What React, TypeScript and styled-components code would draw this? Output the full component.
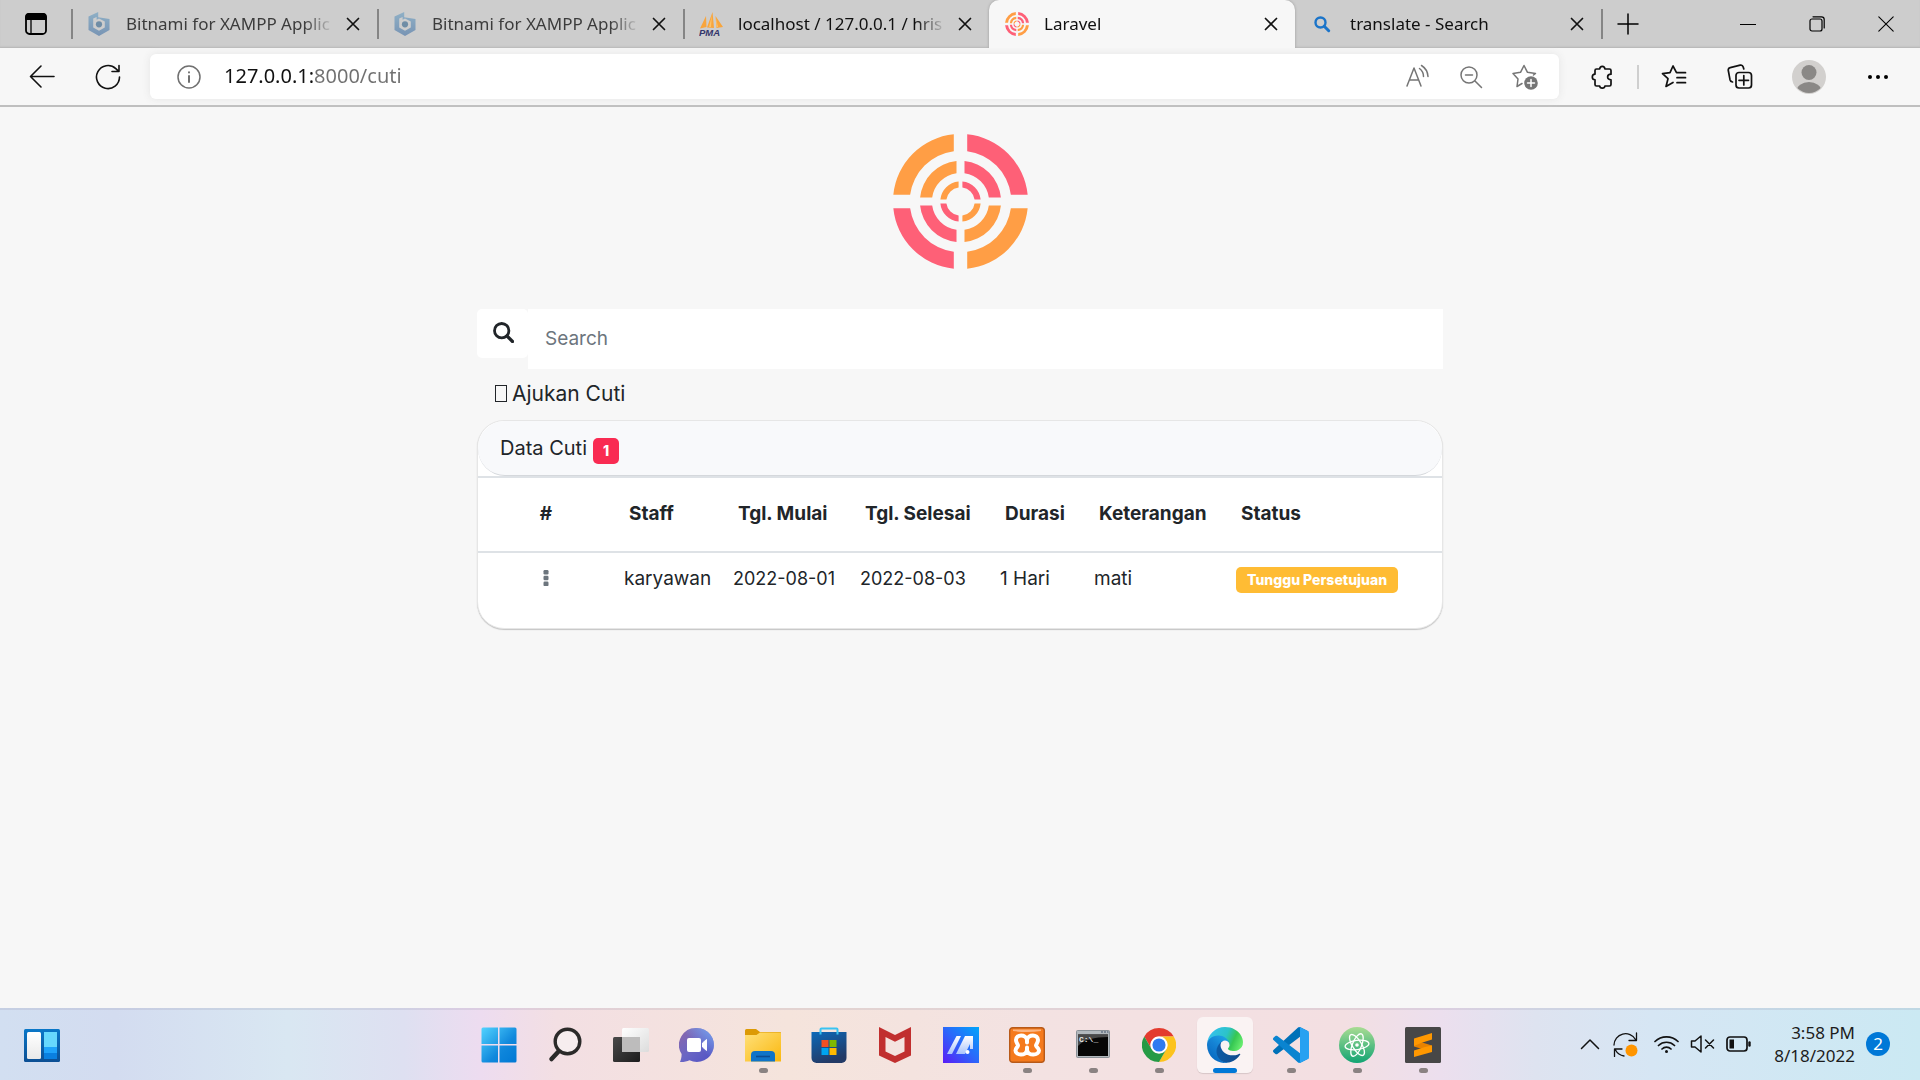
import React from "react";
import styled, { createGlobalStyle, css } from "styled-components";

const uiFont = '"Noto Sans", "Open Sans", sans-serif';
const pageFont = 'Inter, "Liberation Sans", sans-serif';

const GlobalStyle = createGlobalStyle`
  *, *::before, *::after { box-sizing: border-box; }
  body { margin: 0; background: #f7f7f7; font-family: ${uiFont}; }
  button, input { font: inherit; }
  svg { display: block; flex: none; }
`;

const Screen = styled.div`
  min-height: 100vh;
  display: flex;
  flex-direction: column;
`;

const buttonReset = css`
  border: 0;
  padding: 0;
  background: none;
  color: inherit;
  display: flex;
  align-items: center;
  justify-content: center;
  cursor: pointer;
`;

/* ---------- Browser chrome ---------- */

const TabStrip = styled.div`
  display: flex;
  height: 48px;
  background: #cdcdcd;
  box-shadow: inset 0 -2px 2px -1px #b4b4b4;
`;

const StripButton = styled.button<{ $width: number }>`
  ${buttonReset}
  width: ${(p) => p.$width}px;
  flex: none;
  color: #000;
`;

const Tab = styled.div<{ $active?: boolean; $divider?: boolean }>`
  display: flex;
  align-items: center;
  flex: 0 1 306px;
  min-width: 0;
  padding-right: 14px;
  border-radius: 10px 10px 0 0;
  ${(p) => p.$active && "background: #f7f7f7; box-shadow: 0 0 3px #9a9a9a; clip-path: inset(0 -4px 0 -4px);"}
  &::before {
    content: "";
    width: 2px;
    height: 30px;
    margin-right: 14px;
    background: ${(p) => (p.$divider ? "#858585" : "transparent")};
  }
`;

const TabLink = styled.a<{ $dim?: boolean }>`
  display: flex;
  align-items: center;
  gap: 15px;
  flex: 1;
  min-width: 0;
  color: ${(p) => (p.$dim ? "#3c3c3c" : "#101010")};
  text-decoration: none;
  font-size: 17px;
  line-height: 24px;
`;

const TabTitle = styled.span`
  flex: 1;
  overflow: hidden;
  white-space: nowrap;
  mask-image: linear-gradient(90deg, #000 calc(100% - 30px), transparent);
`;

const CloseButton = styled.button`
  ${buttonReset}
  width: 20px;
  height: 24px;
  margin-left: 9px;
  color: #111;
`;

const NewTabDivider = styled.span`
  width: 2px;
  height: 30px;
  align-self: center;
  background: #858585;
`;

const WindowControls = styled.div`
  display: flex;
  margin-left: auto;
`;

const Toolbar = styled.div`
  display: flex;
  align-items: center;
  height: 59px;
  padding: 0 9px;
  background: #f7f7f7;
  border-bottom: 2px solid #bfbfbf;
`;

const ToolButton = styled.button<{ $width?: number }>`
  ${buttonReset}
  width: ${(p) => p.$width ?? 66}px;
  height: 45px;
  flex: none;
  color: #111;
`;

const ToolDivider = styled.span`
  width: 2px;
  height: 24px;
  margin: 0 2px;
  background: #cfcfcf;
`;

const AddressBar = styled.div`
  display: flex;
  align-items: center;
  flex: 1;
  min-width: 0;
  height: 45px;
  margin: 0 10px 0 9px;
  padding: 0 21px 0 27px;
  gap: 27px;
  background: #fff;
  border-radius: 6px;
  box-shadow: 0 0 8px #e4e4e4;
  color: #707070;
`;

const AddressInput = styled.input`
  flex: 1;
  min-width: 0;
  border: 0;
  padding: 0 0 2px;
  margin-left: -4px;
  outline: none;
  font-size: 20px;
  line-height: 30px;
  color: #707070;
  background: linear-gradient(90deg, #111 89px, #707070 89px);
  background-clip: text;
  -webkit-text-fill-color: transparent;
`;

const AddressButton = styled.button`
  ${buttonReset}
  width: 27px;
  height: 30px;
  color: #757575;
`;

/* ---------- Page ---------- */

const Page = styled.main`
  flex: 1;
  width: 100%;
  max-width: 966px;
  margin: 0 auto;
  padding-top: 27px;
  font-family: ${pageFont};
  color: #212529;
`;

const LogoWrap = styled.div`
  display: flex;
  justify-content: center;
  margin-bottom: 40px;
`;

const SearchForm = styled.form`
  display: flex;
  align-items: flex-start;
`;

const SearchButton = styled.button`
  ${buttonReset}
  width: 51px;
  height: 49px;
  padding: 0 0 2px 2px;
  background: #fff;
  border-radius: 5px;
`;

const SearchInput = styled.input`
  flex: 1;
  min-width: 0;
  height: 60px;
  padding: 0 17px 2px;
  border: 0;
  outline: none;
  background: #fff;
  font-size: 19px;
  color: #495057;
  &::placeholder { color: #6c757d; opacity: 1; }
`;

const SubmitLink = styled.a`
  display: flex;
  align-items: center;
  gap: 5px;
  width: fit-content;
  height: 51px;
  padding: 0 18px 3px;
  color: #212529;
  text-decoration: none;
  font-size: 21px;
`;

const MissingGlyph = styled.span`
  width: 12px;
  height: 17px;
  border: 1px solid #212529;
`;

const Card = styled.section`
  overflow: hidden;
  border: 1px solid #e6e6e6;
  border-radius: 27px;
  background: #fff;
  box-shadow: 0 1px 1px #c4c4c4;
`;

const CardHeader = styled.header`
  display: flex;
  align-items: center;
  gap: 6px;
  height: 55px;
  padding-left: 22px;
  border-bottom: 1px solid #d5d8dc;
  border-radius: 27px;
  background: #f8f9fb;
`;

const CardTitle = styled.h1`
  margin: 0;
  font-size: 20px;
  font-weight: 400;
  line-height: 28px;
`;

const Badge = styled.span<{ $tone: "danger" | "warning" }>`
  display: inline-flex;
  align-items: center;
  justify-content: center;
  height: 26px;
  padding: 0 ${(p) => (p.$tone === "danger" ? 10 : 11)}px;
  border-radius: 5px;
  background: ${(p) => (p.$tone === "danger" ? "#f92b52" : "#ffbc34")};
  color: #fff;
  font-size: 14px;
  font-weight: 800;
  line-height: 20px;
  white-space: nowrap;
`;

const CountBadge = styled(Badge)`
  margin-top: 5px;
`;

const LeaveTable = styled.table`
  width: 100%;
  table-layout: fixed;
  border-collapse: collapse;
  font-size: 19px;
  line-height: 28px;
  text-align: left;
`;

const HeadCell = styled.th<{ $center?: boolean }>`
  height: 75px;
  padding: 0 0 2px ${(p) => (p.$center ? 0 : 15)}px;
  border: solid #dee2e6;
  border-width: 2px 0;
  font-weight: 700;
  text-align: ${(p) => (p.$center ? "center" : "left")};
  white-space: nowrap;
`;

const Cell = styled.td<{ $center?: boolean; $date?: boolean }>`
  height: 76px;
  padding: 12px 0 0 ${(p) => (p.$center ? 0 : 10)}px;
  font-size: ${(p) => (p.$date ? 18 : 19)}px;
  vertical-align: top;
  white-space: nowrap;
`;

const MenuButton = styled.button`
  ${buttonReset}
  width: 30px;
  height: 26px;
  margin: 0 auto;
  color: #6c757d;
`;

/* ---------- Taskbar ---------- */

const Taskbar = styled.footer`
  display: grid;
  grid-template-columns: 1fr auto 1fr;
  align-items: center;
  height: 72px;
  border-top: 2px solid rgba(120, 110, 140, 0.14);
  background: linear-gradient(
    90deg,
    #d2dff1 0%,
    #d3dcf0 6%,
    #d9e7f2 15%,
    #dee0f1 21%,
    #eddcf0 25%,
    #f3dfe3 29%,
    #f5e4dc 41%,
    #f3e2e2 54%,
    #f3dfe2 70%,
    #ecdfee 75%,
    #dee3f0 80%,
    #d6e6f4 86%,
    #cbe9f3 100%
  );
`;

const WidgetButton = styled.button`
  ${buttonReset}
  width: 66px;
  height: 56px;
  margin-left: 9px;
`;

const AppList = styled.nav`
  display: flex;
  padding-left: 2px;
`;

const AppButton = styled.button<{ $active?: boolean }>`
  ${buttonReset}
  flex-direction: column;
  justify-content: flex-end;
  gap: 5px;
  width: 56px;
  height: 56px;
  margin: 0 5px;
  border-radius: 6px;
  ${(p) => p.$active && "background: rgba(255, 255, 255, 0.6); box-shadow: 0 1px 1px rgba(0, 0, 0, 0.12);"}
`;

const Indicator = styled.span<{ $state: "none" | "open" | "active" }>`
  width: ${(p) => (p.$state === "active" ? 24 : 9)}px;
  height: 5px;
  border-radius: 3px;
  background: ${(p) => ({ none: "transparent", open: "#8a8282", active: "#0078d7" })[p.$state]};
`;

const Tray = styled.div`
  display: flex;
  align-items: center;
  justify-content: flex-end;
  gap: 11px;
  padding: 0 30px 2px 0;
  color: #111;
`;

const TrayGroup = styled.div`
  display: flex;
  gap: 11px;
  margin-right: 5px;
`;

const TrayButton = styled.button`
  ${buttonReset}
  width: 25px;
  height: 40px;
`;

const Clock = styled.time`
  margin-left: 12px;
  font-size: 17px;
  line-height: 23px;
  text-align: right;
  color: #1c1c1c;
`;

const Notice = styled.span`
  display: flex;
  align-items: center;
  justify-content: center;
  width: 24px;
  height: 24px;
  border-radius: 50%;
  background: #0078d7;
  color: #fff;
  font-size: 17px;
  line-height: 24px;
`;

/* ---------- Drawings ---------- */

const ORANGE = "#ff9e45";
const PINK = "#fe6077";

const rings = [
  { outer: 67.5, inner: 50.8, half: 6.7 },
  { outer: 40.6, inner: 28.6, half: 4 },
  { outer: 20.2, inner: 14.2, half: 1.9 },
];

function TargetLogo({ size }: { size: number }) {
  return (
    <svg width={size} height={size} viewBox="-67.5 -67.5 135 135" aria-hidden="true">
      {rings.map(({ outer, inner, half }) => {
        const o = Math.sqrt(outer * outer - half * half);
        const i = Math.sqrt(inner * inner - half * half);
        const d = `M${half} ${-o}A${outer} ${outer} 0 0 1 ${o} ${-half}H${i}A${inner} ${inner} 0 0 0 ${half} ${-i}Z`;
        return [0, 90, 180, 270].map((angle, n) => (
          <path key={`${outer}-${angle}`} d={d} fill={n % 2 ? ORANGE : PINK} transform={`rotate(${angle})`} />
        ));
      })}
    </svg>
  );
}

type LineProps = { w?: number; h?: number; box?: string; sw?: number; children: React.ReactNode };
const Line = ({ w = 24, h = w, box, sw = 1.6, children }: LineProps) => (
  <svg
    width={w}
    height={h}
    viewBox={box ?? `0 0 ${w} ${h}`}
    fill="none"
    stroke="currentColor"
    strokeWidth={sw}
    strokeLinecap="round"
    strokeLinejoin="round"
    aria-hidden="true"
  >
    {children}
  </svg>
);

const CloseIcon = () => <Line w={14} sw={1.7}><path d="M1.5 1.5l11 11M12.5 1.5l-11 11" /></Line>;

const Bitnami = () => (
  <svg width="24" height="24" viewBox="0 0 24 24" aria-hidden="true">
    <defs>
      <linearGradient id="bit" x1="0" y1="0" x2="0" y2="1">
        <stop offset="0" stopColor="#8fb0c6" />
        <stop offset="1" stopColor="#7894b4" />
      </linearGradient>
    </defs>
    <path
      fill="url(#bit)"
      fillRule="evenodd"
      d="M1.5 4.5L11.2 0v5.2L22.5 7v11L12 24 1.5 18zM6.2 6.6v8.800l5.800 3.400 5.800-3.400V9.600L12 6.400 9.600 7.800V4.900z"
    />
    <circle cx="12" cy="12.3" r="3.1" fill="#6f8da6" />
  </svg>
);

const PmaIcon = () => (
  <svg width="24" height="24" viewBox="0 0 24 24" aria-hidden="true">
    <path d="M7 4L1 16.500l6.500-1.500zM13.500 0L8 15.500l7 .5zM16.500 4l1 12 6.500-1z" fill="#f8a53c" />
    <path d="M13 3l-3 12h2zM17 6l2 9h-1.500z" fill="#fbc36b" />
    <text x="0" y="23.500" fontSize="9.500" fontWeight="700" fontStyle="italic" fontFamily="Liberation Sans" fill="#34356b">PMA</text>
  </svg>
);

const BingSearch = () => (
  <svg width="24" height="24" viewBox="0 0 24 24" fill="none" stroke="#1b74c9" aria-hidden="true">
    <circle cx="9.500" cy="10.500" r="5" strokeWidth="2.400" />
    <path d="M13.200 14.200l4.500 4.500" strokeWidth="3" strokeLinecap="round" />
  </svg>
);

const StartIcon = () => (
  <svg width="36" height="36" viewBox="0 0 36 36" aria-hidden="true">
    <defs>
      <linearGradient id="win" x1="0" y1="0" x2="1" y2="1">
        <stop offset="0" stopColor="#52d3ff" />
        <stop offset=".6" stopColor="#1088dc" />
        <stop offset="1" stopColor="#0078d4" />
      </linearGradient>
    </defs>
    <path fill="url(#win)" d="M2 .5h15v16.500H.5V2A1.500 1.500 0 0 1 2 .5zM18.500.5h15.500a1.500 1.500 0 0 1 1.500 1.500v15h-17zM.5 18.500H17v17H2A1.500 1.500 0 0 1 .5 34zM18.500 18.500h17V34a1.500 1.500 0 0 1-1.500 1.500H18.500z" />
  </svg>
);

const TaskSearch = () => (
  <svg width="36" height="36" viewBox="0 0 36 36" fill="none" stroke="#2b2a29" aria-hidden="true">
    <circle cx="20.500" cy="14.500" r="12.300" strokeWidth="3.400" fill="#f6edee" />
    <path d="M11.500 24.500L4.500 32" strokeWidth="4.500" strokeLinecap="round" />
  </svg>
);

const TaskView = () => (
  <svg width="36" height="36" viewBox="0 0 36 36" aria-hidden="true">
    <defs>
      <linearGradient id="tv" x1="0" y1="0" x2="1" y2="1"><stop stopColor="#4a4a4a" /><stop offset="1" stopColor="#1c1c1c" /></linearGradient>
      <linearGradient id="tw" x1="0" y1="0" x2="1" y2="1"><stop stopColor="#ffffff" /><stop offset="1" stopColor="#dcdcdc" /></linearGradient>
    </defs>
    <rect x="0" y="10" width="27" height="25" rx="1.500" fill="url(#tv)" />
    <rect x="9" y="1" width="27" height="24" rx="1.500" fill="url(#tw)" />
    <rect x="9" y="10" width="18" height="15" fill="#bdbcbc" />
  </svg>
);

const ChatIcon = () => (
  <svg width="36" height="36" viewBox="0 0 36 36" aria-hidden="true">
    <defs>
      <linearGradient id="chat" x1="0" y1="0" x2="1" y2="1"><stop stopColor="#8e67a8" /><stop offset=".5" stopColor="#6a66c4" /><stop offset="1" stopColor="#4f50c4" /></linearGradient>
      <linearGradient id="chat2" x1="1" y1="0" x2="0" y2="1"><stop stopColor="#76a7f2" /><stop offset=".5" stopColor="#76a7f2" stopOpacity="0" /></linearGradient>
    </defs>
    <path d="M18 1a17 17 0 1 1-7.500 32.300C8 34.600 4 35.200 1 35c1-2 1.700-5 1.600-8A17 17 0 0 1 18 1z" fill="url(#chat)" />
    <path d="M18 1a17 17 0 1 1-7.500 32.300C8 34.600 4 35.200 1 35c1-2 1.700-5 1.600-8A17 17 0 0 1 18 1z" fill="url(#chat2)" />
    <rect x="8" y="11" width="14" height="14" rx="2" fill="#fff" />
    <path d="M23.500 16l4-3.500v11l-4-3.500z" fill="#fff" stroke="#fff" strokeLinejoin="round" />
  </svg>
);

const FolderIcon = () => (
  <svg width="36" height="36" viewBox="0 0 36 36" aria-hidden="true">
    <defs><linearGradient id="fold" x1="0" y1="0" x2="1" y2="1"><stop stopColor="#ffe07a" /><stop offset="1" stopColor="#fab80f" /></linearGradient></defs>
    <path d="M0 3.500A1.500 1.500 0 0 1 1.500 2H11l4 3h20a1 1 0 0 1 1 1v6H0z" fill="#dc9a05" />
    <path d="M0 8h11.500L15 5.500h20a1 1 0 0 1 1 1V34.500H0z" fill="url(#fold)" />
    <path d="M6 34.500V28a4 4 0 0 1 4-4h16a4 4 0 0 1 4 4v6.500z" fill="#0f74c8" />
    <path d="M11 29.500h14" stroke="#0b4c92" strokeWidth="1.600" />
  </svg>
);

const StoreIcon = () => (
  <svg width="36" height="36" viewBox="0 0 36 36" aria-hidden="true">
    <defs><linearGradient id="store" x1="0" y1="0" x2=".4" y2="1"><stop stopColor="#0c69b9" /><stop offset="1" stopColor="#233a66" /></linearGradient></defs>
    <path d="M.5 5h35v26a5 5 0 0 1-5 5h-25a5 5 0 0 1-5-5z" fill="url(#store)" />
    <path d="M9.500 7.500V2.500a1 1 0 0 1 1-1h15a1 1 0 0 1 1 1v5" fill="none" stroke="#39c3f2" strokeWidth="2" />
    <path fill="#f25022" d="M10.500 13h7v7h-7z" />
    <path fill="#7fba00" d="M18.500 13h7v7h-7z" />
    <path fill="#00a4ef" d="M10.500 21h7v7h-7z" />
    <path fill="#ffb900" d="M18.500 21h7v7h-7z" />
  </svg>
);

const McafeeIcon = () => (
  <svg width="36" height="36" viewBox="0 0 36 36" aria-hidden="true">
    <path fillRule="evenodd" fill="#c12f2f" d="M2 0l16 8L34 0v28.500L18 36 2 28.500zM8.500 10v14.500L18 29l9.500-4.500V10L18 14.800z" />
  </svg>
);

const MyAsusIcon = () => (
  <svg width="36" height="36" viewBox="0 0 36 36" aria-hidden="true">
    <defs>
      <linearGradient id="asus" x1="0" y1="1" x2="1" y2="0"><stop stopColor="#5a1cf6" /><stop offset=".5" stopColor="#2b67fa" /><stop offset="1" stopColor="#00a5fa" /></linearGradient>
      <linearGradient id="asusM" x1="0" y1="0" x2="0" y2="1"><stop stopColor="#fff" /><stop offset="1" stopColor="#a9c4fc" /></linearGradient>
    </defs>
    <path fill="url(#asus)" d="M0 0h36v36H0z" />
    <path fill="url(#asusM)" d="M13.500 9h4.500L9 27H4zM22 9h4.500L18 27h-5zM26.500 9H30v13h-3v-5l-5 10h-4z" />
    <circle cx="24.500" cy="25" r="2" fill="#fff" />
  </svg>
);

const XamppIcon = () => (
  <svg width="36" height="36" viewBox="0 0 36 36" aria-hidden="true">
    <rect x=".7" y=".7" width="34.600" height="34.600" rx="3" fill="#f57a1d" stroke="#b85a19" strokeWidth="1.400" />
    <path d="M4 2.500h28v1.500q-14 2-28 0z" fill="#fbb583" />
    <path
      fill="none"
      stroke="#fff"
      strokeWidth="4"
      strokeLinejoin="round"
      d="M18 13c-1-6-11-6-11 0 0 3 2 4 2 5.500S6.500 21 6.500 23.500c0 5 10.500 6 11.500-.5 1 6.500 12 5.500 12 .5 0-2.500-3-3.500-3-5s2-2.500 2-5.500c0-6-10-6-11 0z"
    />
    <path d="M18 12v3.500M18 20.500V24" stroke="#fff" strokeWidth="4" strokeLinecap="round" />
  </svg>
);

const TerminalIcon = () => (
  <svg width="36" height="36" viewBox="0 0 36 36" aria-hidden="true">
    <rect x="1.500" y="3.500" width="33" height="27" rx="1" fill="#b2b8bd" stroke="#8a9197" />
    <path d="M26 5h2M29 5h2M32 5h1.500" stroke="#41536b" />
    <path fill="#060606" d="M3 7.500h30V29H3z" />
    <path fill="#494949" d="M3 7.500h30V10C20 10 8 13 3 19z" />
    <text x="4" y="14.500" fontSize="8" fontFamily="Liberation Mono" fontWeight="700" fill="#e8e8e8">C:\_</text>
  </svg>
);

const ChromeIcon = () => (
  <svg width="34" height="36" viewBox="0 -1 48 50" aria-hidden="true">
    {["#e33b2e", "#fcc31d", "#259a45"].map((c, n) => (
      <path key={c} fill={c} transform={`rotate(${n * 120} 24 24)`} d="M24 12H44.800A24 24 0 0 0 3.200 12L13.600 30A12 12 0 0 1 24 12Z" />
    ))}
    <circle cx="24" cy="24" r="12" fill="#fff" />
    <circle cx="24" cy="24" r="9.300" fill="#2f7af0" />
  </svg>
);

const EdgeIcon = () => (
  <svg width="36" height="36" viewBox="0 0 256 256" aria-hidden="true">
    <defs>
      <linearGradient id="e1" x1=".1" y1=".5" x2="1" y2=".5"><stop stopColor="#0c59a4" /><stop offset="1" stopColor="#114a8b" /></linearGradient>
      <linearGradient id="e2" x1=".8" y1=".2" x2=".3" y2="1"><stop stopColor="#1b9de2" /><stop offset=".4" stopColor="#1582d4" /><stop offset="1" stopColor="#0667bf" /></linearGradient>
      <linearGradient id="e3" x1="0" y1=".3" x2="1" y2=".6"><stop stopColor="#35c1f1" /><stop offset=".5" stopColor="#2cc3c8" /><stop offset=".75" stopColor="#36c752" /><stop offset="1" stopColor="#66eb6e" /></linearGradient>
    </defs>
    <g transform="translate(-4.630 -4.920)">
      <path fill="url(#e1)" d="M235.680 195.460a93.730 93.730 0 0 1-10.540 4.710 101.870 101.870 0 0 1-35.900 6.460c-47.320 0-88.540-32.550-88.540-74.320A31.480 31.480 0 0 1 117.130 105c-42.800 1.800-53.800 46.400-53.800 72.530 0 73.880 68.090 81.370 82.760 81.370 7.910 0 19.840-2.300 27-4.560l1.310-.44a128.340 128.340 0 0 0 66.600-52.800 4 4 0 0 0-5.320-5.640z" />
      <path fill="url(#e2)" d="M110.340 246.340A79.200 79.200 0 0 1 87.600 225a80.720 80.720 0 0 1 29.530-120c3.120-1.470 8.450-4.130 15.540-4a32.350 32.350 0 0 1 25.690 13 31.880 31.880 0 0 1 6.360 18.660c0-.21 24.460-79.600-80-79.600-43.900 0-80 41.660-80 78.210a130.150 130.150 0 0 0 12.110 56 128 128 0 0 0 156.380 67.110 75.550 75.550 0 0 1-62.780-8z" />
      <path fill="url(#e3)" d="M156.940 153.780c-.81 1.050-3.300 2.500-3.300 5.660 0 2.610 1.700 5.120 4.720 7.230 14.380 10 41.490 8.680 41.560 8.680a59.560 59.560 0 0 0 30.270-8.350A61.380 61.380 0 0 0 260.620 114c.26-22.410-8-37.310-11.340-43.910C228.090 28.760 182.350 5 132.620 5a128 128 0 0 0-128 126.200c.48-36.540 36.800-66.050 80-66.050 3.500 0 23.460.34 42 10.070 16.340 8.580 24.900 18.940 30.850 29.210 6.180 10.670 7.280 24.150 7.280 29.520s-2.740 13.330-7.810 19.830z" />
    </g>
  </svg>
);

const CodeIcon = () => {
  const ribbon =
    "M96.500 10.800L75.900.9C73.500-.3 70.700.2 68.800 2.100L1.300 63.600C-.5 65.300-.5 68.100 1.300 69.800L6.800 74.800C8.300 76.100 10.500 76.200 12.100 75L93.400 13.300C96.100 11.300 100 13.200 100 16.600V16.400C100 14 98.600 11.800 96.500 10.800Z";
  return (
    <svg width="36" height="36" viewBox="0 0 100 100" aria-hidden="true">
      <path fill="#0071b8" d={ribbon} />
      <path fill="#0a84d0" d={ribbon} transform="matrix(1 0 0 -1 0 100)" />
      <path fill="#27a1f1" d="M75.900 99.100C73.500 100.300 70.700 99.800 68.800 97.900 71.100 100.200 75 98.600 75 95.300V4.700C75 1.400 71.100-.2 68.800 2.100 70.700.2 73.500-.3 75.900.9L96.500 10.800C98.600 11.800 100 14 100 16.400V83.600C100 86 98.600 88.200 96.500 89.200Z" />
    </svg>
  );
};

const AtomIcon = () => (
  <svg width="36" height="36" viewBox="0 0 36 36" aria-hidden="true">
    <defs><linearGradient id="atom" x1="0" y1="0" x2="0" y2="1"><stop stopColor="#a9dc93" /><stop offset="1" stopColor="#12a473" /></linearGradient></defs>
    <circle cx="18" cy="18" r="18" fill="url(#atom)" />
    <g fill="none" stroke="#fff" strokeWidth="1.300">
      <ellipse cx="18" cy="18" rx="12" ry="4.600" transform="rotate(-8 18 18)" />
      <ellipse cx="18" cy="18" rx="12" ry="4.600" transform="rotate(58 18 18)" />
      <ellipse cx="18" cy="18" rx="12" ry="4.600" transform="rotate(112 18 18)" />
    </g>
    <circle cx="18" cy="18" r="1.800" fill="#fff" />
  </svg>
);

const SublimeIcon = () => (
  <svg width="36" height="36" viewBox="0 0 36 36" aria-hidden="true">
    <rect width="36" height="36" rx="1.500" fill="#474747" />
    <path d="M9 13v6.500l18 5.500v-6.500z" fill="#e88200" />
    <path d="M27 6v6.500L16 16l-7 3V11.500zM27 18.500V25L9 30v-6.500L20 20z" fill="#ff9800" />
  </svg>
);

const WidgetsIcon = () => (
  <svg width="36" height="33" viewBox="0 0 36 33" aria-hidden="true">
    <defs>
      <linearGradient id="wg" x1="0" y1="0" x2="0" y2="1"><stop stopColor="#0a77c8" /><stop offset="1" stopColor="#0c4f94" /></linearGradient>
      <linearGradient id="wp" x1="0" y1="0" x2="0" y2="1"><stop stopColor="#fff" /><stop offset="1" stopColor="#e9e9e9" /></linearGradient>
    </defs>
    <rect width="36" height="33" rx="1.500" fill="url(#wg)" />
    <rect x="3" y="3" width="14" height="27" rx="1.500" fill="url(#wp)" />
    <path fill="#67d8fd" d="M20 3h13v15H20z" />
    <path fill="#1fa3fa" d="M20 18h13v6H20z" />
    <path fill="#0a80e0" d="M20 24h13v6H20z" />
  </svg>
);

/* ---------- Data ---------- */

const tabs = [
  { title: "Bitnami for XAMPP Applic", icon: <Bitnami />, dim: true, divider: true },
  { title: "Bitnami for XAMPP Applic", icon: <Bitnami />, dim: true, divider: true },
  { title: "localhost / 127.0.0.1 / hris", icon: <PmaIcon />, divider: true },
  { title: "Laravel", icon: <TargetLogo size={24} />, active: true },
  { title: "translate - Search", icon: <BingSearch /> },
];

const columns = [
  { label: "#", width: 136 },
  { label: "Staff", width: 109 },
  { label: "Tgl. Mulai", width: 127 },
  { label: "Tgl. Selesai", width: 140 },
  { label: "Durasi", width: 94 },
  { label: "Keterangan", width: 142 },
  { label: "Status" },
];

const rows = [{ staff: "karyawan", start: "2022-08-01", end: "2022-08-03", days: "1 Hari", note: "mati", status: "Tunggu Persetujuan" }];

const apps: { name: string; icon: React.ReactNode; state?: "open" | "active" }[] = [
  { name: "Start", icon: <StartIcon /> },
  { name: "Search", icon: <TaskSearch /> },
  { name: "Task View", icon: <TaskView /> },
  { name: "Chat", icon: <ChatIcon /> },
  { name: "File Explorer", icon: <FolderIcon />, state: "open" },
  { name: "Microsoft Store", icon: <StoreIcon /> },
  { name: "McAfee", icon: <McafeeIcon /> },
  { name: "MyASUS", icon: <MyAsusIcon /> },
  { name: "XAMPP", icon: <XamppIcon />, state: "open" },
  { name: "Command Prompt", icon: <TerminalIcon />, state: "open" },
  { name: "Chrome", icon: <ChromeIcon />, state: "open" },
  { name: "Edge", icon: <EdgeIcon />, state: "active" },
  { name: "Visual Studio Code", icon: <CodeIcon />, state: "open" },
  { name: "Atom", icon: <AtomIcon />, state: "open" },
  { name: "Sublime Text", icon: <SublimeIcon />, state: "open" },
];

export default function App() {
  return (
    <Screen>
      <GlobalStyle />
      <header>
        <TabStrip>
          <StripButton $width={71} aria-label="Tab actions">
            <Line w={22} sw={1.8}>
              <rect x="1" y="1" width="20" height="20" rx="3.500" />
              <path d="M1 5V4a3 3 0 0 1 3-3h14a3 3 0 0 1 3 3v2H1z" fill="currentColor" />
              <path d="M6 6v15" strokeWidth="1.300" />
            </Line>
          </StripButton>
          {tabs.map((t, n) => (
            <Tab key={n} $active={t.active} $divider={t.divider}>
              <TabLink href="#" $dim={t.dim}>
                {t.icon}
                <TabTitle>{t.title}</TabTitle>
              </TabLink>
              <CloseButton aria-label="Close tab"><CloseIcon /></CloseButton>
            </Tab>
          ))}
          <NewTabDivider />
          <StripButton $width={50} aria-label="New tab">
            <Line w={22} sw={1.5}><path d="M11 1v20M1 11h20" /></Line>
          </StripButton>
          <WindowControls>
            <StripButton $width={69} aria-label="Minimise"><Line w={16} sw={1.2}><path d="M.5 8.500h15" /></Line></StripButton>
            <StripButton $width={69} aria-label="Restore">
              <Line w={16} sw={1.2}>
                <rect x="1" y="3" width="12" height="12" rx="2" />
                <path d="M4 .8h8.500a2.700 2.700 0 0 1 2.700 2.700V12" />
              </Line>
            </StripButton>
            <StripButton $width={69} aria-label="Close"><Line w={16} sw={1.1}><path d="M.8.8l14.400 14.400M15.200.8L.8 15.200" /></Line></StripButton>
          </WindowControls>
        </TabStrip>

        <Toolbar>
          <ToolButton aria-label="Back"><Line w={26}><path d="M25 12.500H2M12 2L1.500 12.500 12 23" /></Line></ToolButton>
          <ToolButton aria-label="Refresh">
            <Line w={26}><path d="M24.500 13a11.500 11.500 0 1 1-3.700-8.400l2.700 2.600M24 1.500v6h-7" /></Line>
          </ToolButton>
          <AddressBar>
            <Line w={24} sw={1.500}>
              <circle cx="12" cy="12" r="11" />
              <path d="M12 11v6M12 7.200v.2" strokeWidth="2" />
            </Line>
            <AddressInput aria-label="Address" defaultValue="127.0.0.1:8000/cuti" />
            <AddressButton aria-label="Read aloud">
              <Line w={26} sw={1.500}>
                <path d="M3 22L10 4l7 18M5.500 16h9" />
                <path d="M15.500 4.500a10 10 0 0 1 4 8M17.500 1.500a14 14 0 0 1 6.500 11" />
              </Line>
            </AddressButton>
            <AddressButton aria-label="Zoom out">
              <Line w={24} sw={1.500}><circle cx="10" cy="10" r="8" /><path d="M16 16l6.500 6.500M6.500 10h7" /></Line>
            </AddressButton>
            <AddressButton aria-label="Add to favourites">
              <Line w={26} sw={1.500}>
                <path d="M10 19.500l-5 3 1-7.500L1 9.500l7.500-1.200L12 1.500l3.500 6.800 8 1.200-2 1.500" />
                <circle cx="19" cy="19" r="6.800" fill="currentColor" stroke="none" />
                <path d="M19 15.500v7M15.500 19h7" stroke="#fff" />
              </Line>
            </AddressButton>
          </AddressBar>
          <ToolButton aria-label="Extensions">
            <Line w={24} sw={1.700}>
              <path d="M6.500 4h3.200c.2-3.600 5-3.600 5.200 0h4.600a1.500 1.500 0 0 1 1.500 1.500V9.200c-4.500 0-4.500 5.600 0 5.600v4.700a1.500 1.500 0 0 1-1.500 1.500h-4.600c-.2 2.800-5 2.800-5.200 0H6.500A1.500 1.500 0 0 1 5 19.500v-4.700c-3.600-.2-3.600-5.400 0-5.600V5.500A1.500 1.500 0 0 1 6.500 4z" />
            </Line>
          </ToolButton>
          <ToolDivider />
          <ToolButton aria-label="Favourites">
            <Line w={26} sw={1.700}>
              <path d="M24.500 8.700H15.500L12 2 9 8.700 1.500 9.600 7 14.700 5 22.500 12 18.500M16 13.700h8.500M16 18.700h8.500" />
            </Line>
          </ToolButton>
          <ToolButton aria-label="Collections">
            <Line w={26} sw={1.700}>
              <path d="M5.500 18c-1.500-.3-2.200-1-2.500-2.300L1.300 6.500C1 5 1.700 4 3.200 3.600l10-2.400c1.500-.3 2.600.4 3 1.800l.6 2" />
              <rect x="9" y="8.500" width="15.500" height="15.500" rx="3" />
              <path d="M16.800 11.500v9.500M12 16.300h9.500" />
            </Line>
          </ToolButton>
          <ToolButton $width={72} aria-label="Profile">
            <svg width="34" height="34" viewBox="0 0 34 34" aria-hidden="true">
              <clipPath id="face"><circle cx="17" cy="17" r="16" /></clipPath>
              <circle cx="17" cy="17" r="17" fill="#d2d0ce" />
              <g clipPath="url(#face)" fill="#8a8886"><circle cx="17" cy="12.500" r="7.500" /><ellipse cx="17" cy="31" rx="12.500" ry="9" /></g>
            </svg>
          </ToolButton>
          <ToolButton aria-label="Settings and more">
            <svg width="22" height="6" viewBox="0 0 22 6" aria-hidden="true"><circle cx="3" cy="3" r="2" /><circle cx="11" cy="3" r="2" /><circle cx="19" cy="3" r="2" /></svg>
          </ToolButton>
        </Toolbar>
      </header>

      <Page>
        <LogoWrap><TargetLogo size={135} /></LogoWrap>
        <SearchForm role="search">
          <SearchButton type="button" aria-label="Submit search">
            <svg width="21" height="21" viewBox="0 0 21 21" fill="none" stroke="#212529" aria-hidden="true">
              <circle cx="8.700" cy="8.700" r="7.200" strokeWidth="2.800" />
              <path d="M14 14l5.500 5.500" strokeWidth="3.200" strokeLinecap="round" />
            </svg>
          </SearchButton>
          <SearchInput type="text" placeholder="Search" aria-label="Search" />
        </SearchForm>
        <SubmitLink href="#"><MissingGlyph />Ajukan Cuti</SubmitLink>
        <Card>
          <CardHeader>
            <CardTitle>Data Cuti</CardTitle>
            <CountBadge $tone="danger">1</CountBadge>
          </CardHeader>
          <LeaveTable>
            <colgroup>{columns.map((c) => <col key={c.label} width={c.width} />)}</colgroup>
            <thead>
              <tr>{columns.map((c, n) => <HeadCell key={c.label} scope="col" $center={n === 0}>{c.label}</HeadCell>)}</tr>
            </thead>
            <tbody>
              {rows.map((r) => (
                <tr key={r.start}>
                  <Cell $center>
                    <MenuButton aria-label="Row actions">
                      <svg width="6" height="18" viewBox="0 0 6 18" fill="currentColor" aria-hidden="true">
                        <rect x=".5" y="1" width="5" height="4.500" rx="1.200" /><rect x=".5" y="6.800" width="5" height="4.500" rx="1.200" /><rect x=".5" y="12.600" width="5" height="4.500" rx="1.200" />
                      </svg>
                    </MenuButton>
                  </Cell>
                  <Cell>{r.staff}</Cell>
                  <Cell $date>{r.start}</Cell>
                  <Cell $date>{r.end}</Cell>
                  <Cell>{r.days}</Cell>
                  <Cell>{r.note}</Cell>
                  <Cell><Badge $tone="warning">{r.status}</Badge></Cell>
                </tr>
              ))}
            </tbody>
          </LeaveTable>
        </Card>
      </Page>

      <Taskbar>
        <WidgetButton aria-label="Widgets"><WidgetsIcon /></WidgetButton>
        <AppList aria-label="Taskbar">
          {apps.map((a) => (
            <AppButton key={a.name} aria-label={a.name} $active={a.state === "active"}>
              {a.icon}
              <Indicator $state={a.state ?? "none"} />
            </AppButton>
          ))}
        </AppList>
        <Tray>
          <TrayGroup>
            <TrayButton aria-label="Hidden icons"><Line w={20} h={12} sw={1.500}><path d="M1.500 10.500L10 2l8.500 8.500" /></Line></TrayButton>
            <TrayButton aria-label="Updates">
              <Line w={25} sw={1.300}>
                <path d="M1 13A11.500 11.500 0 0 1 22.500 7.500M23.500 1v7.500H16M11 24A11.500 11.500 0 0 1 2.500 18M1.500 24.500V17H9" />
                <circle cx="18.500" cy="18.500" r="6" fill="#ff9500" stroke="none" />
              </Line>
            </TrayButton>
          </TrayGroup>
          <TrayButton aria-label="Network">
            <Line w={25} h={20} sw={1.700}>
              <path d="M1 7.500a16.500 16.500 0 0 1 23 0M4.500 11.500a11.500 11.500 0 0 1 16 0M8 15a6.500 6.500 0 0 1 9 0" />
              <circle cx="12.500" cy="17.500" r="1.500" fill="currentColor" stroke="none" />
            </Line>
          </TrayButton>
          <TrayButton aria-label="Volume muted">
            <Line w={25} h={20} sw={1.500}><path d="M1.500 7h3.500l6-5v16l-6-5H1.500zM15.500 6l8 8M23.500 6l-8 8" /></Line>
          </TrayButton>
          <TrayButton aria-label="Battery">
            <Line w={25} h={18} sw={1.700}>
              <rect x="1" y="2" width="20" height="14" rx="3" />
              <path d="M3.500 4.500h4.500v9H3.500z" fill="currentColor" stroke="none" />
              <path d="M23.500 7.500v3" strokeWidth="2.400" />
            </Line>
          </TrayButton>
          <Clock>3:58 PM<br />8/18/2022</Clock>
          <Notice>2</Notice>
        </Tray>
      </Taskbar>
    </Screen>
  );
}
